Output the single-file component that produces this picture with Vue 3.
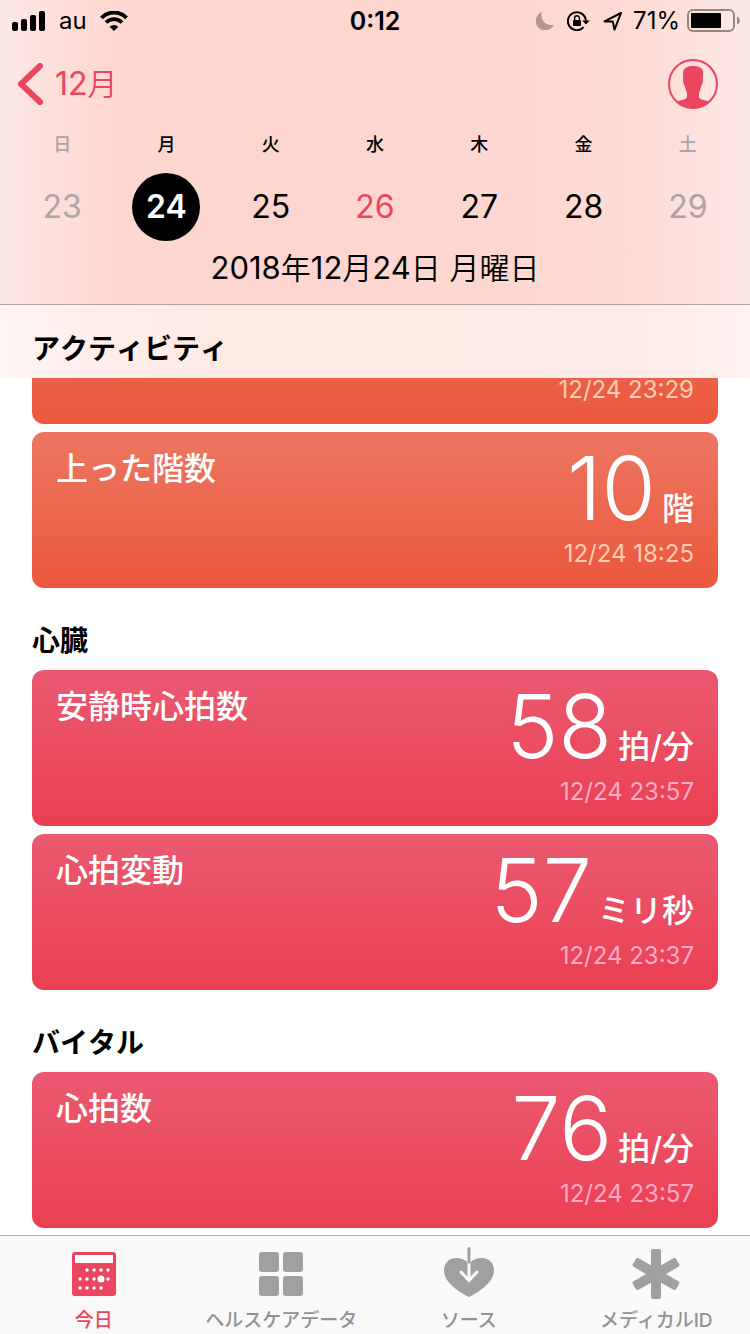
<script setup>
const days = [
  { name: '日', num: 23, dim: true },
  { name: '月', num: 24, selected: true },
  { name: '火', num: 25 },
  { name: '水', num: 26, today: true },
  { name: '木', num: 27 },
  { name: '金', num: 28 },
  { name: '土', num: 29, dim: true }
]

const sections = [
  {
    title: 'アクティビティ',
    tone: 'orange',
    pinned: true,
    cards: [
      { title: '', value: '', unit: '', time: '12/24 23:29' },
      { title: '上った階数', value: '10', unit: '階', time: '12/24 18:25' }
    ]
  },
  {
    title: '心臓',
    tone: 'red',
    cards: [
      { title: '安静時心拍数', value: '58', unit: '拍/分', time: '12/24 23:57' },
      { title: '心拍変動', value: '57', unit: 'ミリ秒', time: '12/24 23:37' }
    ]
  },
  {
    title: 'バイタル',
    tone: 'red',
    cards: [{ title: '心拍数', value: '76', unit: '拍/分', time: '12/24 23:57' }]
  }
]

const dots = [
  [15, 18], [22, 18], [29, 18], [36, 18],
  [8, 27], [15, 27], [22, 27], [36, 27],
  [8, 36], [15, 36], [22, 36], [29, 36]
]
</script>

<template>
  <div class="screen">
    <header class="top">
      <div class="status">
        <div class="status-left">
          <svg width="34" height="20" viewBox="0 0 34 20" aria-hidden="true">
            <rect x="0" y="11" width="6" height="9" rx="2" />
            <rect x="9" y="8" width="6" height="12" rx="2" />
            <rect x="18" y="4" width="6" height="16" rx="2" />
            <rect x="27" y="0" width="6" height="20" rx="2" />
          </svg>
          <span>au</span>
          <svg width="28" height="20" viewBox="0 0 28 20" aria-hidden="true">
            <path d="M1.500 6.800A17.500 17.500 0 0 1 26.500 6.800" fill="none" stroke="#000" stroke-width="4" />
            <path d="M6 11.600A11 11 0 0 1 22 11.600" fill="none" stroke="#000" stroke-width="3.600" />
            <path d="M14 20l-4.300-4.300a6.200 6.200 0 0 1 8.600 0z" />
          </svg>
        </div>
        <strong class="clock">0:12</strong>
        <div class="status-right">
          <svg class="moon" width="18" height="18" viewBox="0 0 18 18" aria-hidden="true">
            <path d="M6 0A9.500 9.500 0 1 0 18 12.600A9.600 9.600 0 0 1 6 0z" fill="#b5978f" />
          </svg>
          <svg class="lock" width="23" height="20" viewBox="0 0 23 20" aria-hidden="true">
            <path d="M18.900 9.800A9 9 0 1 0 16.600 16.200" fill="none" stroke="#000" stroke-width="2" />
            <path d="M15.200 9.400h7.600L19 13.600z" />
            <rect x="6" y="9" width="8" height="6" rx="1" />
            <path d="M7.600 9.500V7.200a2.400 2.400 0 0 1 4.800 0v2.300" fill="none" stroke="#000" stroke-width="1.400" />
          </svg>
          <svg class="arrow" width="20" height="20" viewBox="0 0 20 20" aria-hidden="true">
            <path d="M18 2L1.500 10.400L9.800 10.600L11.500 18.600z" fill="none" stroke="#000" stroke-width="2" stroke-linejoin="round" />
          </svg>
          <span>71%</span>
          <svg class="battery" width="53" height="24" viewBox="0 0 53 24" aria-hidden="true">
            <rect x="1" y="1" width="46" height="21" rx="5" fill="none" stroke="#9a8580" stroke-width="2" />
            <rect x="4" y="4" width="30" height="15" rx="1" />
            <path d="M50 7.500q3 1.500 3 4t-3 4z" fill="#9a8580" />
          </svg>
        </div>
      </div>

      <div class="nav">
        <a href="#" class="back">
          <svg width="25" height="42" viewBox="0 0 25 42" aria-hidden="true">
            <path d="M22 3L3 21L22 39" fill="none" stroke="#ec455f" stroke-width="6" stroke-linecap="round" stroke-linejoin="miter" />
          </svg>
          <span>12<span class="kanji">月</span></span>
        </a>
        <button class="profile" type="button" aria-label="プロフィール">
          <svg width="50" height="50" viewBox="0 0 50 50" aria-hidden="true">
            <circle cx="25" cy="25" r="24" fill="none" stroke="#ec455f" stroke-width="2" />
            <path d="M19 34C18 31.500 17.200 29.500 16.800 27C15.600 26 15.200 23.500 15 20.800L15.300 20.400C15 18 14.900 14.500 15.200 12C16.500 8.500 19.500 7 25 7C30 7 34 8.300 34.900 12.200C35.200 15 35 18 34.700 20.400L35 20.800C34.800 23.500 34.300 26 33.200 27C32.800 29.500 32 31.500 31 34V38C31.500 40.500 36 41 41.500 42.500L41.500 43A24.500 24.500 0 0 1 8.500 43L8.500 42.500C14 41 18.500 40.500 19 38z" fill="#ec455f" />
          </svg>
        </button>
      </div>

      <div class="week">
        <button
          v-for="d in days"
          :key="d.num"
          type="button"
          class="day"
          :class="{ dim: d.dim, selected: d.selected, today: d.today }"
        >
          <span class="name">{{ d.name }}</span>
          <span class="num">{{ d.num }}</span>
        </button>
      </div>
      <p class="full-date">
        2018<span class="kanji">年</span>12<span class="kanji">月</span>24<span class="kanji">日</span> <span class="kanji">月曜日</span>
      </p>
    </header>

    <main class="feed">
      <section v-for="s in sections" :key="s.title" class="group" :class="[s.tone, { pinned: s.pinned }]">
        <h2>{{ s.title }}</h2>
        <div class="cards">
          <article v-for="(c, i) in s.cards" :key="i" class="card">
            <h3>{{ c.title }}</h3>
            <div class="reading">
              <p class="amount">
                <span class="value">{{ c.value }}</span>
                <span class="unit">{{ c.unit }}</span>
              </p>
              <time>{{ c.time }}</time>
            </div>
          </article>
        </div>
      </section>
    </main>

    <nav class="tabs">
      <a href="#" class="tab active">
        <svg width="50" height="52" viewBox="-3 -5 50 52" aria-hidden="true">
          <rect width="44" height="44" rx="3" fill="#ec455f" />
          <rect x="3" y="3" width="38" height="8" fill="#fff" />
          <circle v-for="(p, i) in dots" :key="i" :cx="p[0]" :cy="p[1]" r="1.7" fill="#fff" />
          <circle cx="29" cy="27" r="3.5" fill="#fff" />
        </svg>
        <span>今日</span>
      </a>
      <a href="#" class="tab">
        <svg width="50" height="52" viewBox="-3 -5 50 52" aria-hidden="true">
          <rect width="20" height="20" rx="3" />
          <rect x="24" width="20" height="20" rx="3" />
          <rect y="24" width="20" height="20" rx="3" />
          <rect x="24" y="24" width="20" height="20" rx="3" />
        </svg>
        <span>ヘルスケアデータ</span>
      </a>
      <a href="#" class="tab">
        <svg width="50" height="52" viewBox="0 0 50 52" aria-hidden="true">
          <path d="M25 50C18 46.500 0 36.500 0 23.500C0 16 5 11 12 11C18 11 22.500 13.500 25 16.500C27.500 13.500 32 11 38 11C45 11 50 16 50 23.500C50 36.500 32 46.500 25 50z" />
          <path d="M25 14V33M17 25L25 33.500L33 25" fill="none" stroke="#f9f9f9" stroke-width="3" stroke-linecap="round" />
          <path d="M25 1.500V15" fill="none" stroke="#a0a0a0" stroke-width="3" stroke-linecap="round" />
        </svg>
        <span>ソース</span>
      </a>
      <a href="#" class="tab">
        <svg width="50" height="52" viewBox="0 0 50 52" aria-hidden="true">
          <rect x="20" y="2" width="10" height="50" rx="2" />
          <rect x="20" y="2" width="10" height="50" rx="2" transform="rotate(60 25 27)" />
          <rect x="20" y="2" width="10" height="50" rx="2" transform="rotate(120 25 27)" />
        </svg>
        <span>メディカルID</span>
      </a>
    </nav>
  </div>
</template>

<style>
body {
  margin: 0;
  background: #fff;
}
</style>

<style scoped>
.screen {
  display: flex;
  flex-direction: column;
  height: 100vh;
  overflow: hidden;
  font-family: Inter, 'Noto Sans CJK JP', sans-serif;
  color: #000;
}

h2,
h3,
p {
  margin: 0;
}

button {
  padding: 0;
  border: 0;
  background: none;
  color: inherit;
  font: inherit;
}

a {
  color: inherit;
  text-decoration: none;
}

svg {
  display: block;
  flex: none;
}

.top {
  flex: none;
  border-bottom: 1px solid #b9a19e;
  background: linear-gradient(90deg, #fce9e7 0%, #fde2dd 5%, #fdd8d0 15%, #fcd5ce 35%, #fdd8d1 70%, #fedbd4 85%, #fde2dd 93%, #fce9e7 100%);
}

.status {
  display: grid;
  grid-template-columns: 1fr auto 1fr;
  align-items: center;
  height: 40px;
  padding: 0 12px;
  font-size: 24px;
  line-height: 42px;
}

.status-left,
.status-right {
  display: flex;
  align-items: center;
  height: 40px;
}

.status-left {
  gap: 13px;
}

.status-right {
  justify-content: flex-end;
}

.clock {
  font-size: 25px;
  font-weight: 600;
}

.moon,
.lock {
  margin-right: 13px;
}

.arrow {
  margin-right: 10px;
}

.battery {
  margin-left: 7px;
  margin-right: -2px;
}

.nav {
  display: flex;
  align-items: center;
  justify-content: space-between;
  height: 88px;
  padding: 0 32px 0 18px;
}

.back {
  display: flex;
  align-items: center;
  gap: 12px;
  color: #ec455f;
  font-size: 32px;
  line-height: 42px;
}

.kanji {
  font-size: 30px;
  font-weight: 350;
}

.week {
  display: grid;
  grid-template-columns: repeat(7, 1fr);
  padding: 0 10px;
}

.day {
  display: flex;
  flex-direction: column;
  align-items: center;
  gap: 11px;
}

.name {
  font-size: 18px;
  font-weight: 500;
  line-height: 34px;
}

.num {
  width: 68px;
  border-radius: 50%;
  font-size: 32px;
  line-height: 68px;
}

.dim {
  color: #a9a5a4;
}

.today .num {
  color: #ec455f;
}

.selected .num {
  background: #000;
  color: #fff;
  font-weight: 600;
}

.full-date {
  padding: 7px 0 16px;
  font-size: 31px;
  line-height: 40px;
  text-align: center;
}

.feed {
  flex: 1;
  min-height: 0;
  overflow: hidden;
}

.group h2 {
  padding: 37px 32px 13px;
  font-size: 28px;
  font-weight: 600;
  font-kerning: none;
  line-height: 32px;
}

.group.pinned h2 {
  position: relative;
  z-index: 1;
  padding-top: 28px;
  background: linear-gradient(90deg, #fff5f3 0%, #feeeeb 12%, #fee9e3 30%, #fee9e4 65%, #feebe8 85%, #fff2f0 100%);
}

.pinned .cards {
  margin-top: -110px;
}

.cards {
  display: grid;
  gap: 8px;
  padding: 0 32px;
}

.card {
  display: flex;
  justify-content: space-between;
  box-sizing: border-box;
  min-height: 156px;
  padding: 16px 24px 18px;
  border-radius: 12px;
  color: #fff;
}

.orange .card {
  background: linear-gradient(#ed7661, #eb583d);
}

.red .card {
  background: linear-gradient(#eb5a71, #ea3f52);
}

.card h3 {
  font-size: 32px;
  font-weight: 500;
  line-height: 42px;
}

.reading {
  display: flex;
  flex-direction: column;
  justify-content: space-between;
  align-items: flex-end;
}

.amount {
  display: flex;
  align-items: baseline;
  gap: 6px;
  line-height: 80px;
}

.value {
  font-size: 88px;
  font-weight: 300;
}

.unit {
  font-size: 32px;
  font-weight: 500;
  line-height: 40px;
}

time {
  font-size: 24px;
  line-height: 32px;
}

.orange time {
  color: #ffccb3;
}

.red time {
  color: #ffa9c6;
}

.tabs {
  display: grid;
  grid-template-columns: repeat(4, 1fr);
  flex: none;
  border-top: 1px solid #b2b2b2;
  background: #f9f9f9;
}

.tab {
  display: flex;
  flex-direction: column;
  align-items: center;
  gap: 10px;
  padding: 11px 0 1px;
  color: #929292;
  font-size: 19px;
  font-weight: 500;
  line-height: 24px;
  white-space: nowrap;
}

.tab svg {
  fill: #a0a0a0;
}

.tab.active {
  color: #ec455f;
}
</style>
